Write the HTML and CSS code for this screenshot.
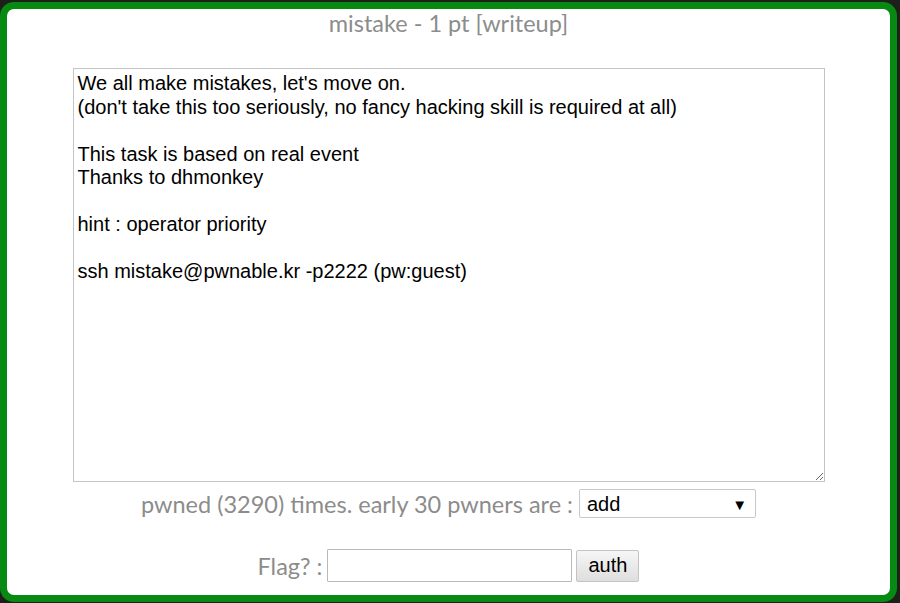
FILE: index.html
```html
<!DOCTYPE html>
<html lang="en">
<head>
    <meta charset="UTF-8">
    <title>mistake</title>
    <link rel="stylesheet" href="styles.css">
</head>
<body>
    <div class="panel">
        <h1 class="title">mistake - 1 pt [writeup]</h1>
        <textarea class="desc" readonly>We all make mistakes, let's move on.
(don't take this too seriously, no fancy hacking skill is required at all)

This task is based on real event
Thanks to dhmonkey

hint : operator priority

ssh mistake@pwnable.kr -p2222 (pw:guest)</textarea>
        <div class="row pwned">
            pwned (3290) times. early 30 pwners are :
            <span class="select">add<span class="arrow">&#9660;</span></span>
        </div>
        <form class="row flag" onsubmit="event.preventDefault();">
            Flag? :
            <input type="text" class="flag-input">
            <button type="submit" class="auth">auth</button>
        </form>
    </div>
</body>
</html>
```

FILE: styles.css
```css
body {
    margin: 0;
    background-color: #1c1f1a;
    font-family: 'Lato', sans-serif;
    height: 603px;
    overflow: hidden;
}

/* caixa principal com borda verde */
.panel {
    box-sizing: border-box;
    width: 897px;
    height: 600px;
    margin-top: 2px;
    background-color: #fff;
    border: 7px solid #078a12;
    border-radius: 14px;
    display: flex;
    flex-direction: column;
    align-items: center;
    color: #8c8c8c;
}

.title {
    font-size: 23.5px;
    font-weight: 400;
    margin: 0;
    line-height: 28px;
}

.desc {
    box-sizing: border-box;
    width: 752px;
    height: 414px;
    margin-top: 31px;
    padding: 3px 4px;
    border: 1px solid #c4c4c4;
    font-family: 'Liberation Sans', Arial, sans-serif;
    font-size: 20px;
    line-height: 23.5px;
    color: #000;
    resize: both;
    outline: none;
}

.row {
    display: flex;
    align-items: center;
    font-size: 23.5px;
}

.pwned {
    margin-top: 7px;
    height: 29px;
}

.select {
    box-sizing: border-box;
    width: 177px;
    height: 29px;
    margin-left: 6px;
    border: 1px solid #c8c8c8;
    border-radius: 2px;
    display: flex;
    align-items: center;
    justify-content: space-between;
    padding: 2px 8px 0 7px;
    font-family: 'Liberation Sans', Arial, sans-serif;
    font-size: 20px;
    color: #000;
}

.arrow {
    font-size: 15px;
}

.flag {
    margin: 31px 0 0 0;
}

.flag-input {
    box-sizing: border-box;
    width: 245px;
    height: 33px;
    margin-left: 5px;
    border: 1px solid #b9b9b9;
    border-radius: 1px;
}

.auth {
    box-sizing: border-box;
    width: 63px;
    height: 32px;
    margin-left: 4px;
    border: 1px solid #c4c4c4;
    border-radius: 2px;
    background: linear-gradient(#f6f6f6, #dedede);
    font-family: 'Liberation Sans', Arial, sans-serif;
    font-size: 20px;
    color: #000;
}
```
